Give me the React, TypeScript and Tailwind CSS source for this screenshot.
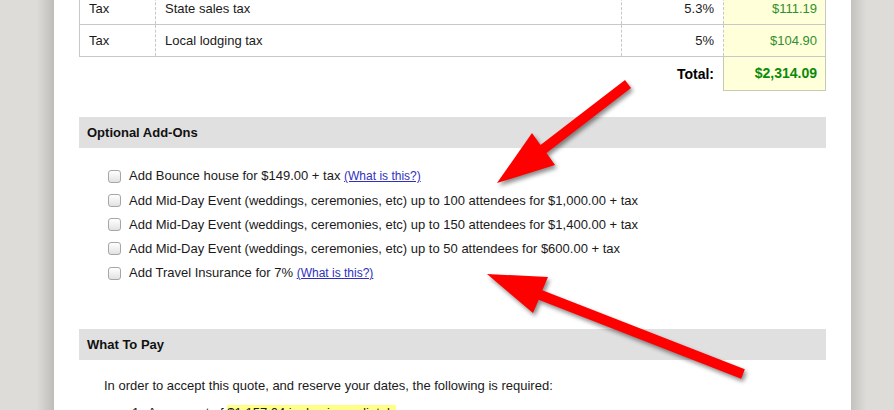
import React from 'react'

const addOns = [
  { label: 'Add Bounce house for $149.00 + tax', link: true },
  { label: 'Add Mid-Day Event (weddings, ceremonies, etc) up to 100 attendees for $1,000.00 + tax' },
  { label: 'Add Mid-Day Event (weddings, ceremonies, etc) up to 150 attendees for $1,400.00 + tax' },
  { label: 'Add Mid-Day Event (weddings, ceremonies, etc) up to 50 attendees for $600.00 + tax' },
  { label: 'Add Travel Insurance for 7%', link: true },
]

const taxRows = [
  { type: 'Tax', desc: 'State sales tax', pct: '5.3%', amount: '$111.19' },
  { type: 'Tax', desc: 'Local lodging tax', pct: '5%', amount: '$104.90' },
]

function Checkbox() {
  return (
    <span className="block h-[13px] w-[13px] shrink-0 rounded-[3px] border border-[#a6a6a6] bg-gradient-to-b from-white to-[#e2e2e2]" />
  )
}

function SectionBar({ title }: { title: string }) {
  return (
    <div className="flex h-[31px] items-center bg-[#e0e0e0] pl-[8px] text-[13px] font-bold text-[#111]">
      {title}
    </div>
  )
}

export default function App() {
  return (
    <div className="relative h-[410px] w-[894px] overflow-hidden bg-[#dddcd8] font-['Liberation_Sans',Arial,sans-serif] text-[13px] text-[#1a1a1a]">
      <div className="flex h-full">
        <div className="w-[54px] shrink-0 bg-gradient-to-r from-[#dddcd8] from-[68%] to-[#bebdb9]" />

        <div className="w-[797px] shrink-0 bg-white px-[25px]">
          {/* price table */}
          <div className="-mt-[7px]">
            {taxRows.map((r) => (
              <div key={r.desc} className="flex h-[32px] border-x border-b border-[#c8c8c8]">
                <div className="flex w-[76px] items-center border-r border-dashed border-[#c8c8c8] px-[9px] pt-[1px]">{r.type}</div>
                <div className="flex w-[466px] items-center border-r border-dashed border-[#c8c8c8] px-[9px] pt-[1px]">{r.desc}</div>
                <div className="flex w-[102px] items-center justify-end border-r border-dashed border-[#c8c8c8] px-[9px] pt-[1px]">{r.pct}</div>
                <div className="flex flex-1 items-center justify-end bg-[#ffffd9] px-[8px] pt-[1px] text-[#2f8f2f]">{r.amount}</div>
              </div>
            ))}
            <div className="flex h-[34px]">
              <div className="flex w-[644px] items-center justify-end px-[9px] text-[14px] font-bold text-black">Total:</div>
              <div className="flex flex-1 items-center justify-end border-x border-b border-[#c8c8b4] bg-[#ffffd9] px-[8px] text-[14px] font-bold text-[#0a8a0a]">
                $2,314.09
              </div>
            </div>
          </div>

          <div className="mt-[26px]">
            <SectionBar title="Optional Add-Ons" />
          </div>

          <ul className="pl-[29px] pt-[16px]">
            {addOns.map((a) => (
              <li key={a.label} className="flex h-[24.25px] items-center gap-[8px]">
                <Checkbox />
                <span>
                  {a.label}
                  {a.link && (
                    <>
                      {' '}
                      <a className="text-[12px] text-[#3030c0] underline">(What is this?)</a>
                    </>
                  )}
                </span>
              </li>
            ))}
          </ul>

          <div className="mt-[44px]">
            <SectionBar title="What To Pay" />
          </div>

          <p className="mt-[18px] pl-[25px] leading-[16px]">
            In order to accept this quote, and reserve your dates, the following is required:
          </p>

          <ol className="mt-[11px] pl-[53px] leading-[16px]">
            <li className="flex gap-[5px]">
              <span>1.</span>
              <span>
                A payment of <span className="bg-[#ffff88]">$1,157.04 is due immediately</span>
              </span>
            </li>
          </ol>
        </div>

        <div className="flex-1 bg-gradient-to-r from-[#c3c2be] to-[#dddcd8] to-[35%]" />
      </div>

      {/* annotation arrows */}
      <svg
        className="pointer-events-none absolute inset-0 drop-shadow-[2px_3px_2px_rgba(0,0,0,0.45)]"
        width="894"
        height="410"
        viewBox="0 0 894 410"
      >
        <polygon
          fill="#ff0000"
          points="625,80 540.5,145 532,133 497,183 555,165 546.5,153 631,88"
        />
        <polygon
          fill="#ff0000"
          points="487,274 548,277 542.3,290.3 744.8,369.3 741.2,378.7 538.7,299.7 533,313"
        />
      </svg>
    </div>
  )
}
